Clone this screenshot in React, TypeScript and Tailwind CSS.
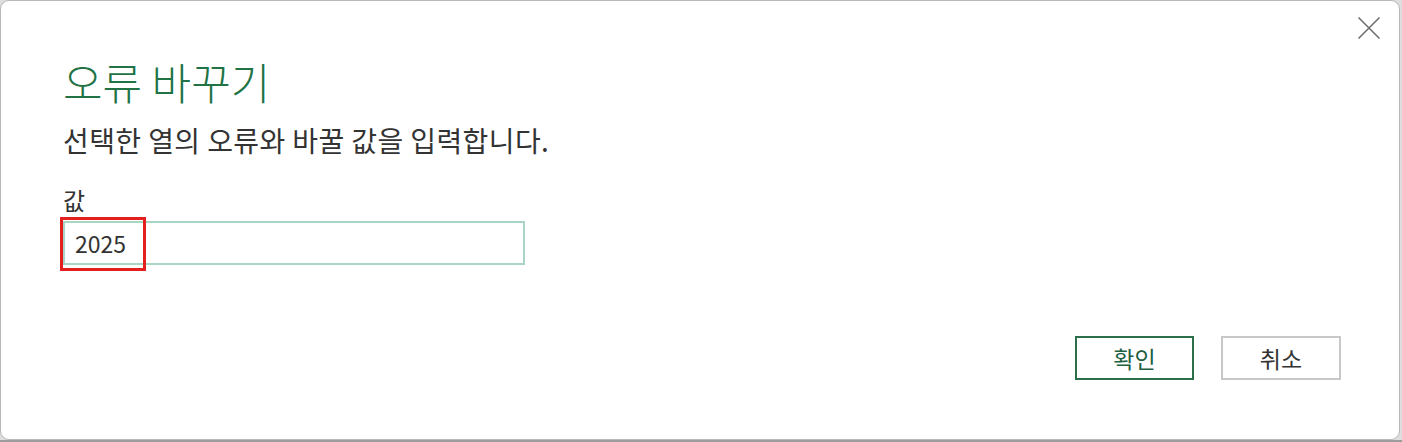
import React from "react";

const font = { fontFamily: '"Noto Sans CJK KR", "Noto Sans", sans-serif' };

export default function App() {
  return (
    <div className="w-[1402px] h-[442px] bg-[#dedede] flex flex-col overflow-hidden" style={font}>
      <div className="relative w-[1400px] h-[440px] bg-white rounded-[9px] border border-[#b8b8b8] pl-[62px] pt-[52px] flex flex-col">
        <button className="absolute right-[18px] top-[15px] w-[24px] h-[24px] flex items-center justify-center">
          <svg width="24" height="24" viewBox="0 0 24 24">
            <path d="M1.5 1.5 L22.5 22.5 M22.5 1.5 L1.5 22.5" stroke="#707070" strokeWidth="1.6" fill="none" />
          </svg>
        </button>
        <h1 className="text-[43px] leading-[56px] font-light text-[#217346]">오류 바꾸기</h1>
        <p className="mt-[13px] text-[28px] leading-[36px] tracking-[0.4px] text-[#333333]">선택한 열의 오류와 바꿀 값을 입력합니다.</p>
        <label className="mt-[27px] text-[24px] leading-[30px] text-[#333333]">값</label>
        <div className="relative mt-[6px] w-[462px] h-[44px] border-2 border-[#a8d5c4] flex items-center pl-[10px]">
          <span className="text-[23px] text-[#333333] leading-none">2025</span>
          <div className="absolute left-[-5px] top-[-6px] w-[86px] h-[54px] border-[3px] border-[#e41f1f]" />
        </div>
        <div className="mt-auto mb-[59px] mr-[58px] flex justify-end gap-[27px]">
          <button className="w-[119px] h-[44px] border-2 border-[#2a6e4a] text-[#21603f] text-[23px] flex items-center justify-center">확인</button>
          <button className="w-[120px] h-[44px] border-2 border-[#c8c8c8] text-[#333333] text-[23px] flex items-center justify-center">취소</button>
        </div>
      </div>
      <div className="h-[2px] bg-[#9c9c9c]" />
    </div>
  );
}
